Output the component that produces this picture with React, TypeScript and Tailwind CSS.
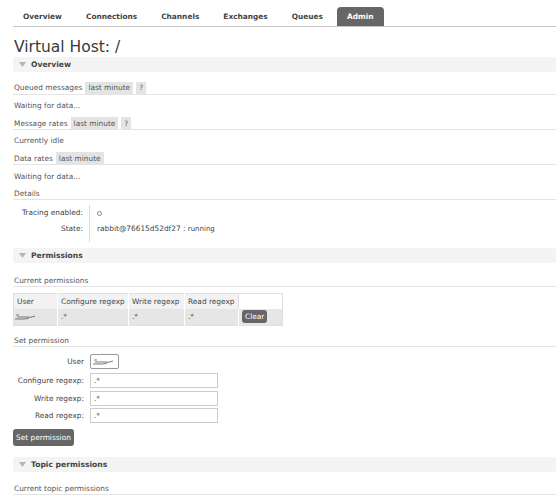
const FONT = { fontFamily: '"DejaVu Sans", Verdana, sans-serif' };

const TABS = ["Overview", "Connections", "Channels", "Exchanges", "Queues", "Admin"];

function Badge({ children }: { children: React.ReactNode }) {
  return (
    <span className="ml-[3px] inline-flex items-center h-[13px] bg-[#e4e4e4] px-[3px] text-[#555]">{children}</span>
  );
}

function SectionHeader({ title }: { title: string }) {
  return (
    <div className="flex items-center h-[15px] bg-[#f4f4f4] pl-[6px] gap-[5px]">
      <svg width="7" height="5" viewBox="0 0 7 5">
        <path d="M0 0 L7 0 L3.5 5 Z" fill="#b5b5b5" />
      </svg>
      <span className="text-[7.6px] font-bold text-[#444]">{title}</span>
    </div>
  );
}

// row with a light rule under it
function LineRow({ className, children }: { className: string; children: React.ReactNode }) {
  return (
    <div className={`flex items-center pl-[1px] pt-[2px] border-b border-[#e4e4e4] whitespace-nowrap ${className}`}>
      {children}
    </div>
  );
}

function PlainRow({ className, children }: { className: string; children: React.ReactNode }) {
  return <div className={`flex items-center pl-[1px] pt-[1px] whitespace-nowrap ${className}`}>{children}</div>;
}

function Scribble({ w = 22 }: { w?: number }) {
  return (
    <svg width={w} height="8" viewBox="0 0 22 8">
      <path d="M1 2 L4 2 M2 4 L12 4 Q16 5 20 3 M0 6 L10 6 L14 5" stroke="#555" strokeWidth="0.8" fill="none" />
    </svg>
  );
}

function FormRow({ label, children, className = "" }: { label: string; children: React.ReactNode; className?: string }) {
  return (
    <div className={`flex items-center h-[15px] ${className}`}>
      <span className="w-[71px] text-right whitespace-nowrap">{label}</span>
      {children}
    </div>
  );
}

export default function App() {
  return (
    <div className="w-[556px] h-[500px] overflow-hidden bg-white text-[7.4px] leading-none text-[#555]" style={FONT}>
      {/* Tabs */}
      <div className="flex items-end h-[27px] ml-[13px] border-b-[1.5px] border-[#c4c4c4] gap-[4px]">
        {TABS.map((t) => (
          <div
            key={t}
            className={
              t === "Admin"
                ? "h-[19px] flex items-center px-[10px] bg-[#666] text-white rounded-t-[4px] font-bold"
                : "h-[19px] flex items-center px-[10px] text-[#444] font-bold"
            }
          >
            {t}
          </div>
        ))}
      </div>

      <div className="pl-[13px]">
        <div className="h-[30px] flex items-center pt-[12px] pl-[1px] text-[15.5px] text-[#3a3a3a]">
          Virtual Host: /
        </div>

        <SectionHeader title="Overview" />

        <LineRow className="h-[15px] mt-[8px]">
          Queued messages<Badge>last minute</Badge><Badge>?</Badge>
        </LineRow>
        <PlainRow className="h-[21px]">Waiting for data...</PlainRow>
        <LineRow className="h-[14px]">
          Message rates<Badge>last minute</Badge><Badge>?</Badge>
        </LineRow>
        <PlainRow className="h-[21px]">Currently idle</PlainRow>
        <LineRow className="h-[14px]">
          Data rates<Badge>last minute</Badge>
        </LineRow>
        <PlainRow className="h-[22px]">Waiting for data...</PlainRow>
        <LineRow className="h-[13px]">Details</LineRow>

        <div className="flex mt-[5px] h-[37px]">
          <div className="w-[70px] flex flex-col items-end gap-[9px] pt-[4px] text-[#444] whitespace-nowrap">
            <span>Tracing enabled:</span>
            <span>State:</span>
          </div>
          <div className="ml-[6px] border-l border-[#dcdcdc] pl-[7px] flex flex-col gap-[8px] pt-[4px]">
            <span className="flex items-center h-[8px]">
              <span className="inline-block w-[5px] h-[5px] rounded-full border border-[#888]" />
            </span>
            <span className="text-[#444] whitespace-nowrap">
              rabbit@76615d52df27 : <span className="text-[7px]">running</span>
            </span>
          </div>
        </div>

        <div className="mt-[6px]">
          <SectionHeader title="Permissions" />
        </div>

        <LineRow className="h-[14px] mt-[10px]">Current permissions</LineRow>

        <table className="mt-[6px] border-collapse border border-[#e0e0e0] text-[#444] whitespace-nowrap">
          <thead>
            <tr className="bg-[#f2f2f2] h-[15px]">
              <th className="w-[44px] text-left font-normal px-[3px] border-r border-white">User</th>
              <th className="w-[71px] text-left font-normal px-[3px] border-r border-white">Configure regexp</th>
              <th className="w-[56px] text-left font-normal px-[3px] border-r border-white">Write regexp</th>
              <th className="w-[54px] text-left font-normal px-[3px] border-r border-[#ddd]">Read regexp</th>
              <th className="w-[44px] bg-white"></th>
            </tr>
          </thead>
          <tbody>
            <tr className="bg-[#e6e6e6] h-[17px]">
              <td className="px-[1px] border-r border-white"><Scribble /></td>
              <td className="px-[3px] border-r border-white">.*</td>
              <td className="px-[3px] border-r border-white">.*</td>
              <td className="px-[3px] border-r border-white">.*</td>
              <td className="px-[3px]">
                <span className="inline-flex items-center h-[13px] bg-[#666] text-white rounded-[3px] px-[3px]">Clear</span>
              </td>
            </tr>
          </tbody>
        </table>

        <LineRow className="h-[14px] mt-[7px]">Set permission</LineRow>

        <div className="flex flex-col mt-[7px] text-[#444]">
          <FormRow label="User">
            <span className="ml-[6px] w-[29px] h-[15px] border border-[#999] rounded-[2px] flex items-center bg-white">
              <Scribble w={26} />
            </span>
          </FormRow>
          <FormRow label="Configure regexp:" className="mt-[4px]">
            <span className="ml-[6px] w-[128px] h-[15px] border border-[#ccc] flex items-center pl-[3px]">.*</span>
          </FormRow>
          <FormRow label="Write regexp:" className="mt-[3px]">
            <span className="ml-[6px] w-[128px] h-[15px] border border-[#ccc] flex items-center pl-[3px]">.*</span>
          </FormRow>
          <FormRow label="Read regexp:" className="mt-[2px]">
            <span className="ml-[6px] w-[128px] h-[15px] border border-[#ccc] flex items-center pl-[3px]">.*</span>
          </FormRow>
        </div>

        <div className="mt-[6px] flex">
          <span className="inline-flex items-center h-[17px] px-[3px] bg-[#666] text-white rounded-[3px]">
            Set permission
          </span>
        </div>

        <div className="mt-[11px]">
          <SectionHeader title="Topic permissions" />
        </div>

        <LineRow className="h-[13px] mt-[10px]">Current topic permissions</LineRow>
      </div>
    </div>
  );
}
